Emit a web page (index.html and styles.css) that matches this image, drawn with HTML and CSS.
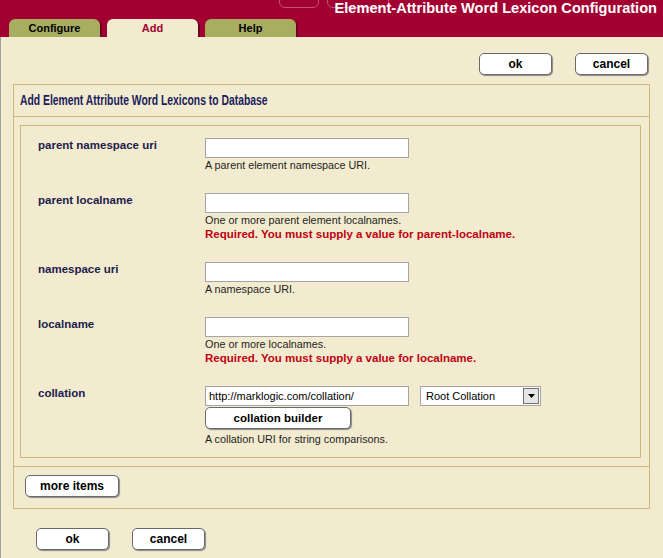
FILE: index.html
```html
<!DOCTYPE html>
<html>
<head>
<meta charset="utf-8">
<link rel="stylesheet" href="styles.css">
</head>
<body>
<div class="header">
  <span class="deco deco-a"></span>
  <span class="deco deco-b"></span>
  <div class="tabs">
    <div class="tab">Configure</div>
    <div class="tab tab-active">Add</div>
    <div class="tab">Help</div>
  </div>
  <div class="title">Element-Attribute Word Lexicon Configuration</div>
</div>
<div class="content">
  <div class="top-actions">
    <button class="btn btn-small">ok</button>
    <button class="btn btn-small">cancel</button>
  </div>
  <div class="panel">
    <div class="panel-head"><span class="panel-title">Add Element Attribute Word Lexicons to Database</span></div>
    <div class="inner">
      <div class="row">
        <div class="label">parent namespace uri</div>
        <div class="field">
          <input class="text" type="text">
          <div class="help">A parent element namespace URI.</div>
        </div>
      </div>
      <div class="row">
        <div class="label">parent localname</div>
        <div class="field">
          <input class="text" type="text">
          <div class="help">One or more parent element localnames.</div>
          <div class="error">Required. You must supply a value for parent-localname.</div>
        </div>
      </div>
      <div class="row">
        <div class="label">namespace uri</div>
        <div class="field">
          <input class="text" type="text">
          <div class="help">A namespace URI.</div>
        </div>
      </div>
      <div class="row">
        <div class="label">localname</div>
        <div class="field">
          <input class="text" type="text">
          <div class="help">One or more localnames.</div>
          <div class="error">Required. You must supply a value for localname.</div>
        </div>
      </div>
      <div class="row">
        <div class="label">collation</div>
        <div class="field">
          <div class="coll-line">
            <input class="text" type="text" value="http://marklogic.com/collation/">
            <div class="select">
              <span>Root Collation</span>
              <span class="arrow"><svg width="7" height="4" viewBox="0 0 7 4"><path d="M0 0h7L3.5 4z" fill="#000"/></svg></span>
            </div>
          </div>
          <button class="btn btn-builder">collation builder</button>
          <div class="help help-coll">A collation URI for string comparisons.</div>
        </div>
      </div>
    </div>
    <div class="panel-foot">
      <button class="btn btn-more">more items</button>
    </div>
  </div>
  <div class="bottom-actions">
    <button class="btn btn-small">ok</button>
    <button class="btn btn-small">cancel</button>
  </div>
</div>
</body>
</html>
```

FILE: styles.css
```css
html, body {
  margin: 0;
  padding: 0;
  background: #F2EBCF;
  font-family: "Liberation Sans", Arial, sans-serif;
}

.header {
  position: relative;
  height: 37px;
  background: #A30032;
  display: flex;
  justify-content: space-between;
  overflow: hidden;
}

.deco {
  position: absolute;
  top: -6px;
  height: 12px;
  border: 1px solid #C45276;
  border-radius: 0 0 6px 6px;
}
.deco-a { left: 279px; width: 38px; }
.deco-b { left: 327px; width: 60px; }

.tabs {
  align-self: flex-end;
  display: flex;
  gap: 7px;
  padding-left: 9px;
}

.tab {
  width: 91px;
  height: 18px;
  line-height: 19px;
  background: #A8AE60;
  border-radius: 6px 6px 0 0;
  box-shadow: 2px 1px 0 #6E0022;
  text-align: center;
  font-weight: bold;
  font-size: 11px;
  color: #000;
}
.tab-active {
  background: #F2EBCF;
  color: #A30032;
}

.title {
  position: relative;
  align-self: flex-start;
  color: #fff;
  font-weight: bold;
  font-size: 14.6px;
  line-height: 16px;
  padding-right: 6px;
}

.content {
  border-left: 1px solid #A0A0A0;
  min-height: 521px;
  box-sizing: border-box;
}

.top-actions {
  display: flex;
  justify-content: flex-end;
  gap: 23px;
  padding: 16px 15px 0 0;
}

.btn {
  display: block;
  background: #fff;
  border: 1px solid #6A6A6A;
  border-radius: 5px;
  box-shadow: 1px 1px 1px #8A8A8A;
  font-family: "Liberation Sans", Arial, sans-serif;
  font-weight: bold;
  font-size: 12px;
  color: #000;
  padding: 0;
  height: 22px;
  box-sizing: border-box;
}
.btn-small { width: 73px; }

.panel {
  margin: 9px 13px 0 12px;
  border: 1px solid #CDB877;
}

.panel-head {
  height: 31px;
  line-height: 31px;
  padding-left: 6px;
  border-bottom: 1px solid #CDB877;
  font-weight: bold;
  font-size: 14px;
  color: #1C1C5C;
}

.panel-title {
  display: inline-block;
  transform: scaleX(0.74);
  transform-origin: left center;
  white-space: nowrap;
}

.inner {
  margin: 8px 8px 8px 6px;
  border: 1px solid #CDB877;
  padding: 12px 0 11px 17px;
  display: flex;
  flex-direction: column;
  gap: 21px;
}

.row {
  display: flex;
}

.label {
  width: 167px;
  flex: none;
  font-weight: bold;
  font-size: 11.5px;
  line-height: 14px;
  color: #1C1C4C;
}

.field {
  display: flex;
  flex-direction: column;
  align-items: flex-start;
}

.text {
  display: block;
  margin: 0;
  width: 204px;
  height: 20px;
  box-sizing: border-box;
  border: 1px solid #A5A5A5;
  background: #fff;
  padding: 0 3px;
  font-family: "Liberation Sans", Arial, sans-serif;
  font-size: 11px;
  color: #000;
}

.help {
  font-size: 10.8px;
  line-height: 14px;
  color: #1E1E1E;
}

.error {
  font-size: 11.5px;
  line-height: 14px;
  font-weight: bold;
  color: #C00010;
}

.coll-line {
  display: flex;
  gap: 11px;
}

.select {
  width: 121px;
  height: 20px;
  box-sizing: border-box;
  border: 1px solid #A5A5A5;
  background: #fff;
  display: flex;
  align-items: center;
  justify-content: space-between;
  padding: 0 1px 0 5px;
  font-size: 11px;
  color: #000;
}

.arrow {
  width: 16px;
  height: 16px;
  box-sizing: border-box;
  border: 1px solid #707070;
  background: #E6E6E6;
  display: flex;
  align-items: center;
  justify-content: center;
}

.btn-builder {
  width: 146px;
  margin-top: 1px;
  font-size: 11.5px;
}

.help-coll {
  margin-top: 3px;
}

.panel-foot {
  border-top: 1px solid #CDB877;
  padding: 8px 0 11px 11px;
}

.btn-more { width: 94px; }

.bottom-actions {
  display: flex;
  gap: 23px;
  padding: 19px 0 0 35px;
}
```
